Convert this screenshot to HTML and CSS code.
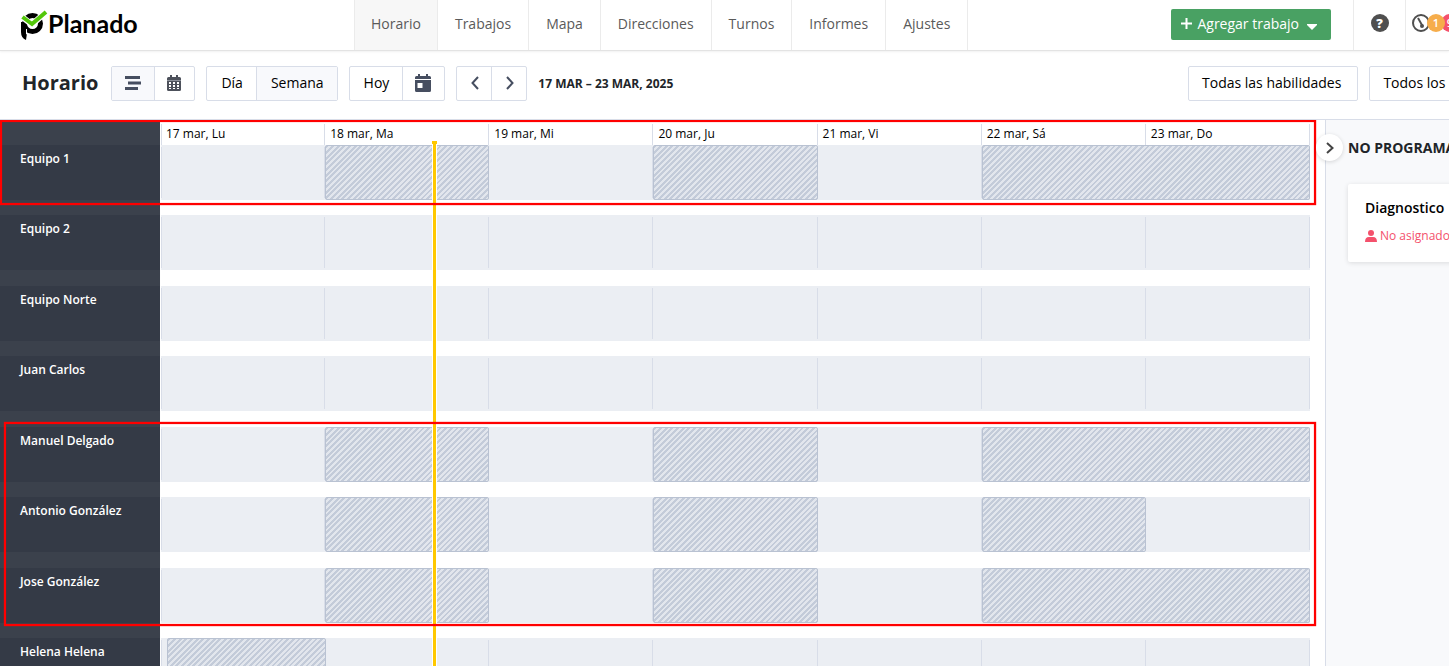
FILE: index.html
```html
<!DOCTYPE html>
<html lang="es">
<head>
    <meta charset="UTF-8">
    <meta name="viewport" content="width=device-width, initial-scale=1.0">
    <title>Planado - Horario</title>
    <link rel="stylesheet" href="styles.css">
</head>
<body>
    <header class="topbar">
        <a class="logo" href="#">
            <svg width="28" height="32" viewBox="0 0 28 32" aria-hidden="true">
                <circle cx="12.500" cy="14.500" r="8" fill="none" stroke="#000" stroke-width="5"/>
                <path d="M1 13h5v6l1 5-1 7q-5-2-5-8z" fill="#000"/>
                <path d="M6.500 20v5l2 1.500" fill="none" stroke="#fff" stroke-width="1"/>
                <path d="M1 7l11 8.500L26 3" fill="none" stroke="#fff" stroke-width="6"/>
                <path d="M2.500 8l9.500 7L26 3" fill="none" stroke="#53c70a" stroke-width="4"/>
            </svg>
            <span class="logo-text">Planado</span>
        </a>
        <nav class="menu">
            <a class="active" href="#">Horario</a>
            <a href="#">Trabajos</a>
            <a href="#">Mapa</a>
            <a href="#">Direcciones</a>
            <a href="#">Turnos</a>
            <a href="#">Informes</a>
            <a href="#">Ajustes</a>
        </nav>
        <button class="add-job" type="button">
            <svg width="11" height="11" viewBox="0 0 11 11" aria-hidden="true"><path d="M5.500 0v11M0 5.500h11" stroke="#fff" stroke-width="2"/></svg>
            Agregar trabajo
            <svg class="caret" width="10" height="6" viewBox="0 0 10 6" aria-hidden="true"><path d="M0 0h10v1L5 6 0 1z" fill="#fff"/></svg>
        </button>
        <button class="help" type="button" aria-label="Ayuda"><span>?</span></button>
        <button class="status" type="button" aria-label="Estado">
            <svg width="18" height="18" viewBox="0 0 18 18" aria-hidden="true">
                <circle cx="9" cy="9" r="8" fill="#fff" stroke="#4f4f4f" stroke-width="2"/>
                <path d="M6 4l4.500 8" stroke="#4f4f4f" stroke-width="2"/>
                <circle cx="10" cy="12" r="2" fill="#4f4f4f"/>
            </svg>
            <span class="count count-orange">1</span>
            <span class="count count-red">9</span>
        </button>
    </header>

    <div class="toolbar">
        <h1>Horario</h1>
        <div class="group">
            <button class="on icon-wide" type="button" aria-label="Cronograma">
                <svg width="16" height="14" viewBox="0 0 16 14" aria-hidden="true"><path d="M0 1.500h15M3 7h13M0 12.500h13" stroke="#464e60" stroke-width="3"/></svg>
            </button>
            <button class="icon" type="button" aria-label="Calendario">
                <svg width="14" height="16" viewBox="0 0 14 16" aria-hidden="true">
                    <path d="M3 0h2v2h4V0h2v2h1.500Q14 2 14 3.500V5H0V3.500Q0 2 1.500 2H3z" fill="#4d515b"/>
                    <path d="M0 5h14v1H0z" fill="#8d929b"/>
                    <path d="M0 6h14v8.500q0 1.500-1.500 1.500h-11Q0 16 0 14.500z" fill="#4d515b"/>
                    <path d="M2 7h2v2H2zM6 7h2v2H6zM10 7h2v2h-2zM2 10h2v2H2zM6 10h2v2H6zM10 10h2v2h-2zM2 13h2v1H2zM6 13h2v1H6zM10 13h2v1h-2z" fill="#fff"/>
                </svg>
            </button>
        </div>
        <div class="group">
            <button type="button">Día</button>
            <button class="on" type="button">Semana</button>
        </div>
        <div class="group">
            <button type="button">Hoy</button>
            <button class="icon" type="button" aria-label="Elegir fecha">
                <svg width="16" height="18" viewBox="0 0 16 18" aria-hidden="true">
                    <path d="M3 0h2v2h6V0h2v2h1.500Q16 2 16 3.500V5H0V3.500Q0 2 1.500 2H3z" fill="#464e60"/>
                    <path d="M0 6h16v10.500q0 1.500-1.500 1.500h-13Q0 18 0 16.500zM2.500 9v5h5V9z" fill="#464e60" fill-rule="evenodd"/>
                </svg>
            </button>
        </div>
        <div class="group">
            <button class="arrow" type="button" aria-label="Semana anterior">
                <svg width="8" height="14" viewBox="0 0 8 14" aria-hidden="true"><path d="M7 1L1.500 7 7 13" fill="none" stroke="#464e60" stroke-width="2"/></svg>
            </button>
            <button class="arrow" type="button" aria-label="Semana siguiente">
                <svg width="8" height="14" viewBox="0 0 8 14" aria-hidden="true"><path d="M1 1l5.500 6L1 13" fill="none" stroke="#464e60" stroke-width="2"/></svg>
            </button>
        </div>
        <strong class="range">17 MAR – 23 MAR, 2025</strong>
        <div class="filters">
            <button type="button">Todas las habilidades</button>
            <button type="button">Todos los</button>
        </div>
    </div>

    <main class="board">
        <section class="schedule">
            <div class="days">
                <div class="corner"></div>
                <div class="track-head">
                    <span>17 mar, Lu</span>
                    <span>18 mar, Ma</span>
                    <span>19 mar, Mi</span>
                    <span>20 mar, Ju</span>
                    <span>21 mar, Vi</span>
                    <span>22 mar, Sá</span>
                    <span>23 mar, Do</span>
                </div>
            </div>
            <div class="rows">
                <div class="row">
                    <div class="name">Equipo 1</div>
                    <div class="track">
                        <i></i><i></i><i></i><i></i><i></i><i></i><i></i>
                        <div class="off tue"></div>
                        <div class="off thu"></div>
                        <div class="off weekend"></div>
                    </div>
                </div>
                <div class="row">
                    <div class="name">Equipo 2</div>
                    <div class="track"><i></i><i></i><i></i><i></i><i></i><i></i><i></i></div>
                </div>
                <div class="row">
                    <div class="name">Equipo Norte</div>
                    <div class="track"><i></i><i></i><i></i><i></i><i></i><i></i><i></i></div>
                </div>
                <div class="row">
                    <div class="name">Juan Carlos</div>
                    <div class="track"><i></i><i></i><i></i><i></i><i></i><i></i><i></i></div>
                </div>
                <div class="row">
                    <div class="name">Manuel Delgado</div>
                    <div class="track">
                        <i></i><i></i><i></i><i></i><i></i><i></i><i></i>
                        <div class="off tue"></div>
                        <div class="off thu"></div>
                        <div class="off weekend"></div>
                    </div>
                </div>
                <div class="row">
                    <div class="name">Antonio González</div>
                    <div class="track">
                        <i></i><i></i><i></i><i></i><i></i><i></i><i></i>
                        <div class="off tue"></div>
                        <div class="off thu"></div>
                        <div class="off sat"></div>
                    </div>
                </div>
                <div class="row">
                    <div class="name">Jose González</div>
                    <div class="track">
                        <i></i><i></i><i></i><i></i><i></i><i></i><i></i>
                        <div class="off tue"></div>
                        <div class="off thu"></div>
                        <div class="off weekend"></div>
                    </div>
                </div>
                <div class="row">
                    <div class="name">Helena Helena</div>
                    <div class="track">
                        <i></i><i></i><i></i><i></i><i></i><i></i><i></i>
                        <div class="off mon"></div>
                    </div>
                </div>
            </div>
            <div class="now-area"><div class="now"></div></div>
            <div class="mark mark-team"></div>
            <div class="mark mark-people"></div>
        </section>
        <aside class="panel">
            <button class="toggle" type="button" aria-label="Ocultar panel">
                <svg width="8" height="12" viewBox="0 0 8 12" aria-hidden="true"><path d="M1 1l5.500 5L1 11" fill="none" stroke="#444" stroke-width="2"/></svg>
            </button>
            <div class="panel-body">
                <h2>NO PROGRAMADO</h2>
                <article class="card">
                    <h3>Diagnostico</h3>
                    <p>
                        <svg width="12" height="12" viewBox="0 0 12 12" aria-hidden="true"><circle cx="6" cy="3" r="3" fill="#f4516c"/><path d="M0 12q0-5 4-5h4q4 0 4 5z" fill="#f4516c"/></svg>
                        No asignado
                    </p>
                </article>
            </div>
        </aside>
    </main>
</body>
</html>
```
FILE: styles.css
```css
:root {
    --line: #d8dde8;
    --dark: #343a46;
    --dark-gap: #3b414c;
    --track: #ebeef3;
    --red: #ff0000;
}

* {
    margin: 0;
    padding: 0;
    box-sizing: border-box;
}

body {
    height: 100vh;
    display: flex;
    flex-direction: column;
    overflow: hidden;
    background: #fff;
    color: #000;
    font-family: "Open Sans", "Noto Sans", sans-serif;
    font-size: 14px;
    white-space: nowrap;
}

button {
    font: inherit;
    color: inherit;
    background: none;
    border: none;
    cursor: pointer;
}

a {
    text-decoration: none;
}

svg {
    display: block;
    flex: none;
}

/* Top bar */
.topbar {
    flex: none;
    display: flex;
    height: 51px;
    border-bottom: 1px solid #e3e3e3;
    box-shadow: 0 1px 2px rgba(0, 0, 0, 0.06);
}

.logo {
    width: 354px;
    display: flex;
    align-items: center;
    padding-left: 20px;
    color: #000;
}

.logo-text {
    font-family: Lato, sans-serif;
    font-size: 25px;
    line-height: 28px;
    font-weight: 700;
    padding-bottom: 4px;
}

.menu {
    display: flex;
}

.menu a {
    padding: 0 17px;
    line-height: 48px;
    color: #5a5a5a;
    border-right: 1px solid #ebebeb;
}

.menu .active {
    padding: 0 16px;
    background: #f7f7f7;
    border-left: 1px solid #ebebeb;
}

.add-job {
    display: flex;
    align-items: center;
    gap: 5px;
    height: 31px;
    margin: 9px 22px 0 auto;
    padding: 0 14px 2px 10px;
    border-radius: 2px;
    background: #49a163;
    color: #fff;
}

.caret {
    margin: 6px 0 0 3px;
}

.help {
    display: flex;
    justify-content: center;
    width: 53px;
    padding-top: 14px;
    border: 1px solid #ebebeb;
    border-width: 0 1px;
}

.help span {
    width: 18px;
    height: 18px;
    border-radius: 50%;
    background: #4f4f4f;
    color: #fff;
    font-size: 13px;
    line-height: 18px;
    font-weight: 800;
}

.status {
    display: flex;
    align-items: center;
    width: 43px;
    padding: 0 0 4px 6px;
    overflow: hidden;
}

.count {
    flex: none;
    width: 18px;
    height: 18px;
    border-radius: 50%;
    font-size: 11px;
    line-height: 18px;
    font-weight: 600;
    color: #fff;
}

.count-orange {
    background: #f6ad4b;
    margin-left: -3px;
    z-index: 1;
}

.count-red {
    background: #f4516c;
    margin-left: -4px;
}

/* Toolbar */
.toolbar {
    flex: none;
    display: flex;
    align-items: center;
    gap: 11px;
    height: 69px;
    padding: 0 0 4px 22px;
    border-bottom: 1px solid var(--line);
}

h1 {
    font-size: 20px;
    line-height: 28px;
    color: #212529;
    margin-right: 2px;
}

.group {
    display: flex;
    height: 35px;
    border: 1px solid var(--line);
    border-radius: 2px;
}

.group button {
    padding: 0 13px 2px 14px;
}

.group button + button {
    border-left: 1px solid var(--line);
}

.group .on {
    background: #f8f9fc;
}

.group .icon,
.group .icon-wide {
    padding: 0 13px 0 12px;
}

.group .icon-wide {
    padding-left: 13px;
}

.group .arrow {
    padding: 0 12px 0 14px;
}

.range {
    font-size: 12px;
    color: #212529;
}

.filters {
    display: flex;
    gap: 11px;
    width: 261px;
    margin-left: auto;
    overflow: hidden;
}

.filters button {
    flex: none;
    height: 35px;
    padding: 0 16px 2px 13px;
    border: 1px solid var(--line);
    border-radius: 2px;
}

/* Schedule */
.board {
    flex: 1;
    min-height: 0;
    display: flex;
}

.schedule {
    flex: 1;
    min-width: 0;
    position: relative;
    overflow: hidden;
}

.days,
.row {
    display: grid;
    grid-template-columns: 160px 1fr;
}

.corner {
    background: var(--dark-gap);
}

.track-head,
.track {
    display: grid;
    grid-template-columns: repeat(7, minmax(0, 1fr));
    margin: 0 15px 0 1px;
}

.track-head {
    height: 25px;
    padding-top: 4px;
    font-size: 12px;
    line-height: 19px;
}

.track-head span {
    padding-left: 5px;
    border-right: 1px solid var(--line);
}

.track-head span:first-child,
.track i:first-child {
    border-left: 1px solid var(--line);
}

.track-head span:first-child {
    padding-left: 4px;
}

.name {
    height: 70px;
    padding: 4px 20px;
    border-bottom: 15px solid var(--dark-gap);
    background: var(--dark);
    color: #fff;
    font-size: 12px;
    line-height: 20px;
    font-weight: 600;
}

/* rows alternate 70px and 71px */
.row:nth-child(even) .name {
    height: 71px;
    border-bottom-width: 16px;
}

.track {
    height: 55px;
    background: var(--track);
}

.track i {
    grid-row: 1;
    margin: 2px 0;
    border-right: 1px solid var(--line);
}

.track i:nth-child(1) { grid-column: 1; }
.track i:nth-child(2) { grid-column: 2; }
.track i:nth-child(3) { grid-column: 3; }
.track i:nth-child(4) { grid-column: 4; }
.track i:nth-child(5) { grid-column: 5; }
.track i:nth-child(6) { grid-column: 6; }
.track i:nth-child(7) { grid-column: 7; }

.off {
    grid-row: 1;
    border: 1px solid #b9c2d2;
    border-radius: 2px;
    background: repeating-linear-gradient(135deg, #c3cbd9 0 2px, #e2e6ed 2px 4px);
}

.mon {
    grid-column: 1;
    margin: 0 -1px 0 6px;
}

.tue {
    grid-column: 2;
}

.thu {
    grid-column: 4;
}

.sat {
    grid-column: 6;
}

.weekend {
    grid-column: 6 / span 2;
}

/* Current time line */
.now-area {
    position: absolute;
    top: 21px;
    bottom: 0;
    left: 161px;
    right: 15px;
    pointer-events: none;
}

.now {
    position: absolute;
    top: 0;
    bottom: 0;
    left: 23.6%;
    width: 5px;
    border: 1px solid #fff;
    border-width: 0 1px;
    background: #ffc800;
}

.now::before {
    content: "";
    position: absolute;
    top: 0;
    left: -1px;
    width: 5px;
    height: 3px;
    background: #ffc800;
}

/* Highlight frames */
.mark {
    position: absolute;
    right: 9px;
    border: 2px solid var(--red);
    box-shadow: 0 0 1px var(--red), inset 0 0 1px var(--red);
    pointer-events: none;
}

.mark-team {
    top: 0;
    left: 0;
    height: 85px;
}

.mark-people {
    top: 302px;
    left: 4px;
    height: 204px;
}

/* Unscheduled jobs */
.panel {
    flex: 0 0 124px;
    min-width: 0;
    position: relative;
    border-left: 1px solid var(--line);
    background: #f8f9fb;
}

.toggle {
    position: absolute;
    top: 14px;
    left: -10px;
    display: flex;
    align-items: center;
    justify-content: center;
    width: 27px;
    height: 27px;
    border-radius: 50%;
    background: #fff;
    box-shadow: 0 1px 4px rgba(0, 0, 0, 0.15);
}

.panel-body {
    height: 100%;
    padding: 17px 0 0 22px;
    overflow: hidden;
}

h2 {
    font-size: 14px;
    line-height: 21px;
    color: #212529;
}

.card {
    width: 280px;
    margin-top: 26px;
    padding: 14px 17px 16px;
    border-radius: 2px;
    background: #fff;
    box-shadow: 0 1px 5px rgba(0, 0, 0, 0.12);
}

h3 {
    font-size: 14px;
    line-height: 20px;
    font-weight: 600;
}

.card p {
    display: flex;
    align-items: center;
    gap: 3px;
    margin-top: 8px;
    font-size: 12px;
    line-height: 20px;
    color: #f4516c;
}
```
